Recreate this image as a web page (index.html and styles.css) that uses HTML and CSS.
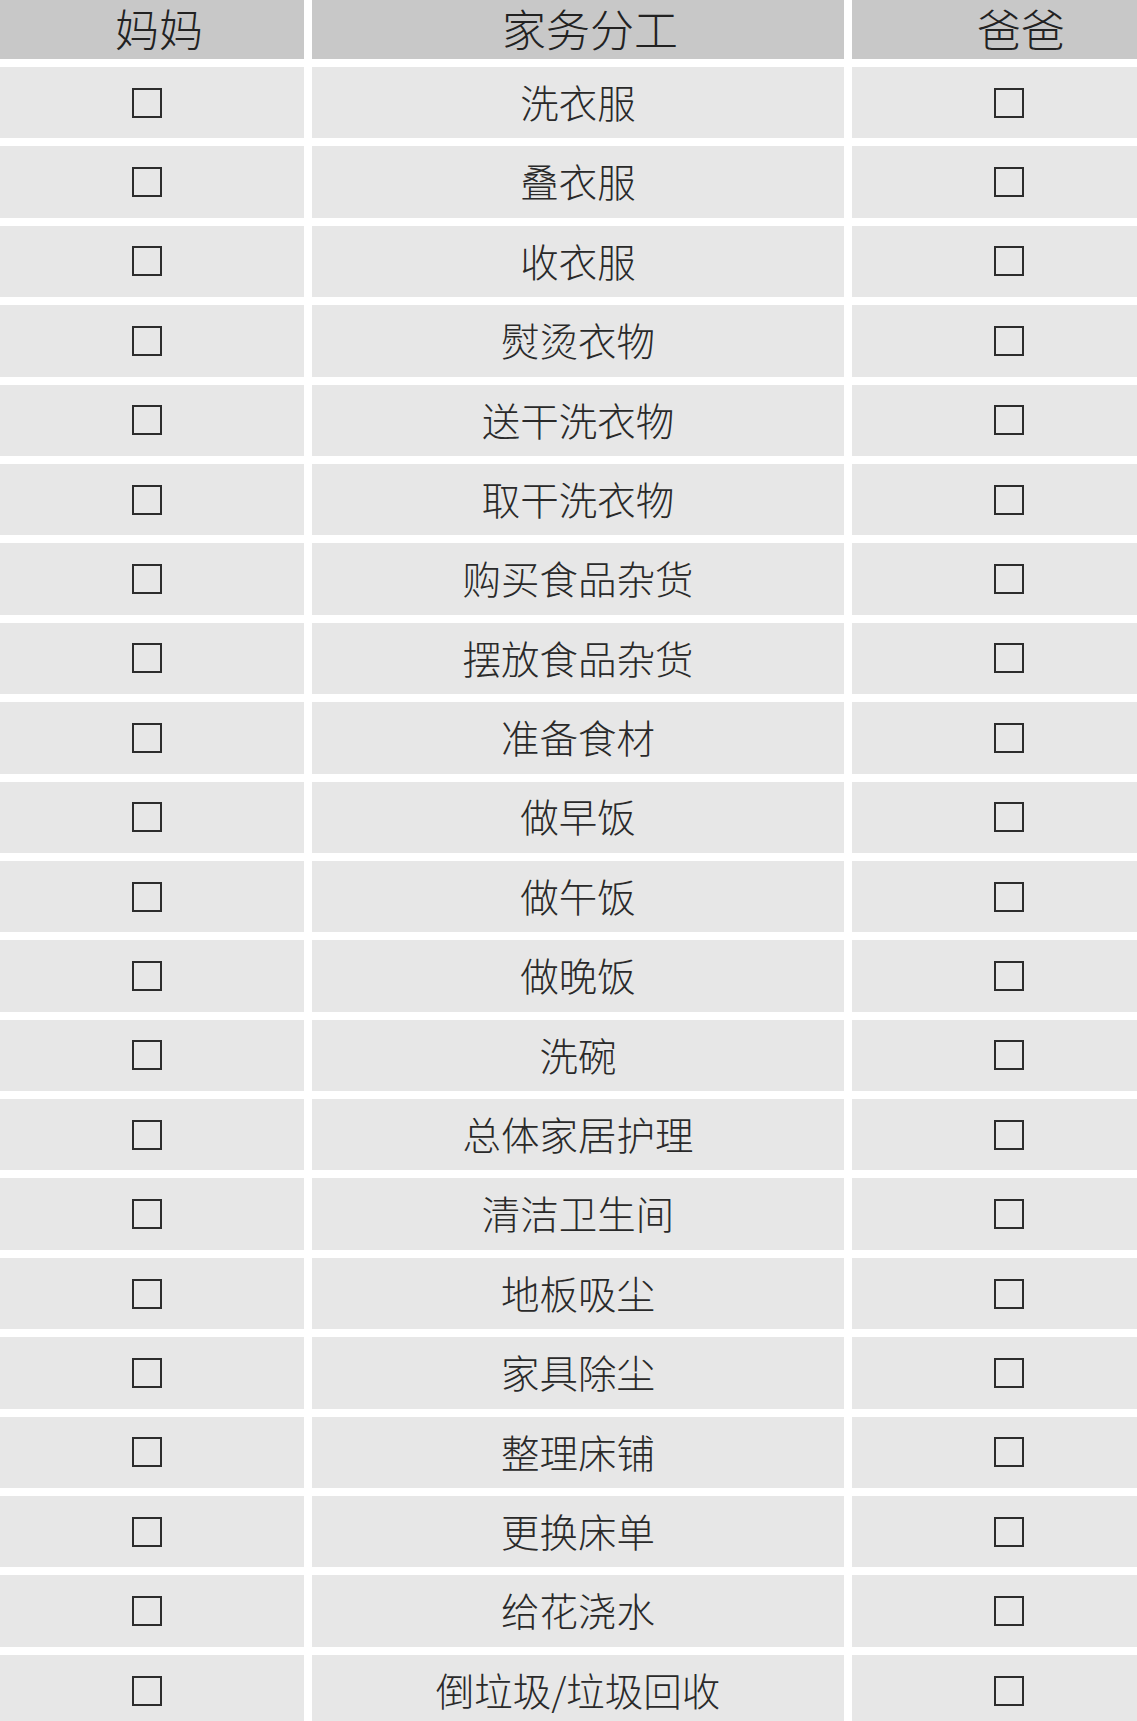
FILE: index.html
```html
<!DOCTYPE html>
<html lang="zh-CN">
<head>
<meta charset="utf-8">
<title>家务分工</title>
<link rel="stylesheet" href="styles.css">
</head>
<body>
<div class="page">
  <div class="chart">
    <div class="cell head">妈妈</div>
    <div class="cell head">家务分工</div>
    <div class="cell head">爸爸</div>

    <div class="cell"><span class="box"></span></div><div class="cell task">洗衣服</div><div class="cell"><span class="box"></span></div>
    <div class="cell"><span class="box"></span></div><div class="cell task">叠衣服</div><div class="cell"><span class="box"></span></div>
    <div class="cell"><span class="box"></span></div><div class="cell task">收衣服</div><div class="cell"><span class="box"></span></div>
    <div class="cell"><span class="box"></span></div><div class="cell task">熨烫衣物</div><div class="cell"><span class="box"></span></div>
    <div class="cell"><span class="box"></span></div><div class="cell task">送干洗衣物</div><div class="cell"><span class="box"></span></div>
    <div class="cell"><span class="box"></span></div><div class="cell task">取干洗衣物</div><div class="cell"><span class="box"></span></div>
    <div class="cell"><span class="box"></span></div><div class="cell task">购买食品杂货</div><div class="cell"><span class="box"></span></div>
    <div class="cell"><span class="box"></span></div><div class="cell task">摆放食品杂货</div><div class="cell"><span class="box"></span></div>
    <div class="cell"><span class="box"></span></div><div class="cell task">准备食材</div><div class="cell"><span class="box"></span></div>
    <div class="cell"><span class="box"></span></div><div class="cell task">做早饭</div><div class="cell"><span class="box"></span></div>
    <div class="cell"><span class="box"></span></div><div class="cell task">做午饭</div><div class="cell"><span class="box"></span></div>
    <div class="cell"><span class="box"></span></div><div class="cell task">做晚饭</div><div class="cell"><span class="box"></span></div>
    <div class="cell"><span class="box"></span></div><div class="cell task">洗碗</div><div class="cell"><span class="box"></span></div>
    <div class="cell"><span class="box"></span></div><div class="cell task">总体家居护理</div><div class="cell"><span class="box"></span></div>
    <div class="cell"><span class="box"></span></div><div class="cell task">清洁卫生间</div><div class="cell"><span class="box"></span></div>
    <div class="cell"><span class="box"></span></div><div class="cell task">地板吸尘</div><div class="cell"><span class="box"></span></div>
    <div class="cell"><span class="box"></span></div><div class="cell task">家具除尘</div><div class="cell"><span class="box"></span></div>
    <div class="cell"><span class="box"></span></div><div class="cell task">整理床铺</div><div class="cell"><span class="box"></span></div>
    <div class="cell"><span class="box"></span></div><div class="cell task">更换床单</div><div class="cell"><span class="box"></span></div>
    <div class="cell"><span class="box"></span></div><div class="cell task">给花浇水</div><div class="cell"><span class="box"></span></div>
    <div class="cell"><span class="box"></span></div><div class="cell task">倒垃圾/垃圾回收</div><div class="cell"><span class="box"></span></div>
  </div>
</div>
</body>
</html>
```
FILE: styles.css
```css
html, body {
  margin: 0;
  padding: 0;
  background: #ffffff;
}

.page {
  width: 1137px;
  height: 1721px;
  overflow: hidden;
  font-family: "Noto Sans CJK SC", "Noto Sans", sans-serif;
  color: #222222;
}

.chart {
  display: grid;
  grid-template-columns: 314px 532px 314px;
  grid-template-rows: 59px;
  grid-auto-rows: 71.4px;
  column-gap: 8px;
  row-gap: 8px;
  margin-left: -10px;
}

.cell {
  background: #e7e7e7;
  display: flex;
  align-items: center;
  justify-content: center;
}

.head {
  background: #c8c8c8;
  font-size: 44px;
  font-weight: 300;
  line-height: 1;
  padding-left: 24px;
  padding-bottom: 4px;
  box-sizing: border-box;
}

.task {
  font-size: 38.5px;
  font-weight: 300;
  line-height: 1;
  color: #2a2a2a;
  padding-bottom: 3px;
  box-sizing: border-box;
}

.box {
  width: 30px;
  height: 30px;
  box-sizing: border-box;
  border: 2px solid #2c2c2c;
}
```
